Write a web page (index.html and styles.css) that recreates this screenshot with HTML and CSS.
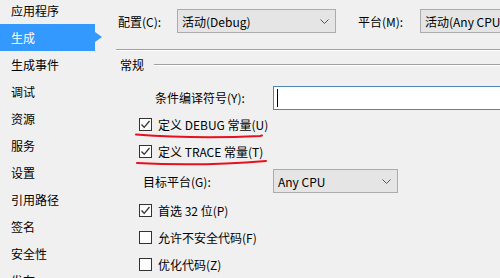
FILE: index.html
```html
<!DOCTYPE html>
<html lang="zh-CN">
<head>
    <meta charset="UTF-8">
    <title>项目属性 - 生成</title>
    <link rel="stylesheet" href="styles.css">
</head>
<body>
    <div class="window">
        <ul class="sidebar">
            <li>应用程序</li>
            <li class="active">生成</li>
            <li>生成事件</li>
            <li>调试</li>
            <li>资源</li>
            <li>服务</li>
            <li>设置</li>
            <li>引用路径</li>
            <li>签名</li>
            <li>安全性</li>
            <li>发布</li>
        </ul>

        <div class="main">
            <div class="top-row">
                <span class="top-label">配置(C):</span>
                <div class="combo combo-config">
                    <span>活动(Debug)</span>
                    <svg class="chevron" width="9" height="5" viewBox="0 0 9 5"><polyline points="0.5,0.5 4.5,4.5 8.5,0.5" fill="none" stroke="#555" stroke-width="1"/></svg>
                </div>
                <span class="top-label platform-label">平台(M):</span>
                <div class="combo combo-platform">
                    <span>活动(Any CPU)</span>
                </div>
            </div>

            <div class="separator"></div>

            <div class="group-header">
                <span>常规</span>
                <div class="group-line"></div>
            </div>

            <div class="rows">
                <div class="row">
                    <span class="field-label symbols-label">条件编译符号(Y):</span>
                    <div class="textbox"><span class="caret"></span></div>
                </div>

                <div class="row">
                    <span class="checkbox checked"><svg width="11" height="11" viewBox="0 0 11 11"><polyline points="1.5,5.5 4.2,8.3 9.5,2" fill="none" stroke="#333" stroke-width="1.3"/></svg></span>
                    <span class="check-text">定义 DEBUG 常量(U)</span>
                </div>

                <div class="row">
                    <span class="checkbox checked"><svg width="11" height="11" viewBox="0 0 11 11"><polyline points="1.5,5.5 4.2,8.3 9.5,2" fill="none" stroke="#333" stroke-width="1.3"/></svg></span>
                    <span class="check-text">定义 TRACE 常量(T)</span>
                </div>

                <div class="row row-tall">
                    <span class="field-label target-label">目标平台(G):</span>
                    <div class="combo combo-target">
                        <span>Any CPU</span>
                        <svg class="chevron" width="9" height="5" viewBox="0 0 9 5"><polyline points="0.5,0.5 4.5,4.5 8.5,0.5" fill="none" stroke="#555" stroke-width="1"/></svg>
                    </div>
                </div>

                <div class="row">
                    <span class="checkbox checked"><svg width="11" height="11" viewBox="0 0 11 11"><polyline points="1.5,5.5 4.2,8.3 9.5,2" fill="none" stroke="#333" stroke-width="1.3"/></svg></span>
                    <span class="check-text">首选 32 位(P)</span>
                </div>

                <div class="row">
                    <span class="checkbox"></span>
                    <span class="check-text">允许不安全代码(F)</span>
                </div>

                <div class="row">
                    <span class="checkbox"></span>
                    <span class="check-text">优化代码(Z)</span>
                </div>
            </div>

            <!-- 手绘的红色下划线标注 -->
            <svg class="marks" width="400" height="278" viewBox="0 0 400 278">
                <path d="M36,134.5 Q95,139 160,136 Q162,135.5 162,135.5" fill="none" stroke="#e8101e" stroke-width="2" stroke-linecap="round"/>
                <path d="M37,163 Q100,166.5 166,161" fill="none" stroke="#e8101e" stroke-width="2" stroke-linecap="round"/>
            </svg>
        </div>
    </div>
</body>
</html>
```

FILE: styles.css
```css
body {
    margin: 0;
    padding: 0;
    background: #f0f0f0;
    font-family: "Noto Sans CJK SC", "Noto Sans", sans-serif;
    font-size: 12px;
    color: #000;
    overflow: hidden;
}

.window {
    display: flex;
    width: 500px;
    height: 278px;
    overflow: hidden;
}

.sidebar {
    list-style: none;
    margin: -3px 0 0 0;
    padding: 0;
    width: 100px;
    flex-shrink: 0;
}

.sidebar li {
    position: relative;
    width: 95px;
    height: 27px;
    line-height: 27px;
    padding-left: 11px;
    box-sizing: border-box;
}

.sidebar li.active {
    background: #3399ff;
    color: #fff;
}

.sidebar li.active::after {
    content: "";
    position: absolute;
    left: 95px;
    top: 8px;
    border-left: 7px solid #3399ff;
    border-top: 5px solid transparent;
    border-bottom: 5px solid transparent;
}

.main {
    position: relative;
    flex: 1;
    padding-top: 9px;
}

.top-row {
    display: flex;
    align-items: center;
    height: 24px;
}

.top-label {
    margin-left: 18px;
    width: 59px;
}

.platform-label {
    margin-left: 22px;
    width: 62px;
}

.combo {
    display: flex;
    align-items: center;
    justify-content: space-between;
    height: 24px;
    box-sizing: border-box;
    padding: 0 6px 0 4px;
    background: #e5e5e5;
    border: 1px solid #acacac;
}

.combo-config {
    width: 159px;
}

.combo-platform {
    width: 120px;
    flex-shrink: 0;
}

.combo-target {
    width: 125px;
}

.chevron {
    display: block;
}

.separator {
    margin: 16px 0 0 16px;
    border-top: 1px solid #a0a0a0;
    border-bottom: 1px solid #fff;
}

.group-header {
    display: flex;
    align-items: center;
    height: 18px;
    margin: 4px 0 0 20px;
}

.group-line {
    flex: 1;
    margin: 1px 0 0 10px;
    border-top: 1px solid #a0a0a0;
    border-bottom: 1px solid #fff;
}

.rows {
    margin: 11px 0 0 39px;
}

.row {
    display: flex;
    align-items: center;
    height: 27px;
}

.row-tall {
    height: 32px;
}

.field-label {
    width: 134px;
    flex-shrink: 0;
    box-sizing: border-box;
}

.symbols-label {
    padding-left: 16px;
}

.target-label {
    padding-left: 4px;
}

.textbox {
    display: flex;
    align-items: center;
    width: 240px;
    height: 24px;
    flex-shrink: 0;
    box-sizing: border-box;
    padding-left: 3px;
    background: #fff;
    border: 1px solid #4f86b8;
}

.caret {
    width: 1px;
    height: 18px;
    background: #000;
}

.checkbox {
    display: flex;
    align-items: center;
    justify-content: center;
    width: 13px;
    height: 13px;
    box-sizing: border-box;
    background: #fff;
    border: 1px solid #333;
    flex-shrink: 0;
}

.check-text {
    margin-left: 6px;
}

.marks {
    position: absolute;
    left: 0;
    top: 0;
    pointer-events: none;
}
```
